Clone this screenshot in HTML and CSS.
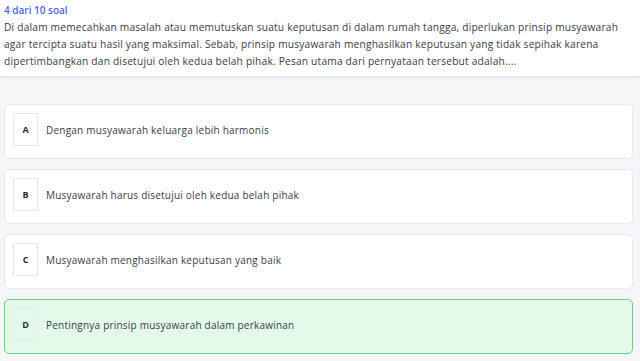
FILE: index.html
```html
<!DOCTYPE html>
<html>
<head>
<meta charset="utf-8">
<link rel="stylesheet" href="styles.css">
</head>
<body>
<header class="question">
  <div class="counter">4 dari 10 soal</div>
  <p class="text">Di dalam memecahkan masalah atau memutuskan suatu keputusan di dalam rumah tangga, diperlukan prinsip musyawarah agar tercipta suatu hasil yang maksimal. Sebab, prinsip musyawarah menghasilkan keputusan yang tidak sepihak karena dipertimbangkan dan disetujui oleh kedua belah pihak. Pesan utama dari pernyataan tersebut adalah....</p>
</header>
<main class="options">
  <div class="option"><span class="letter">A</span><span class="label">Dengan musyawarah keluarga lebih harmonis</span></div>
  <div class="option"><span class="letter">B</span><span class="label">Musyawarah harus disetujui oleh kedua belah pihak</span></div>
  <div class="option"><span class="letter">C</span><span class="label">Musyawarah menghasilkan keputusan yang baik</span></div>
  <div class="option selected"><span class="letter">D</span><span class="label">Pentingnya prinsip musyawarah dalam perkawinan</span></div>
</main>
</body>
</html>
```
FILE: styles.css
```css
html, body {
  margin: 0;
  padding: 0;
  background: #f5f6f8;
  font-family: "Open Sans", "Noto Sans", sans-serif;
}
.question {
  background: #ffffff;
  padding: 3px 4px 0 4px;
  height: 73px;
  box-shadow: 0 1px 3px rgba(0,0,0,0.12);
}
.counter {
  color: #4f63f2;
  font-size: 10px;
  font-weight: 600;
  line-height: 14px;
}
.text {
  margin: 2px 0 0 0;
  color: #3b3b4a;
  font-size: 10.2px;
  line-height: 17px;
  letter-spacing: 0.2px;
}
.options {
  display: flex;
  flex-direction: column;
  gap: 10px;
  padding: 28px 7px 0 4px;
}
.option {
  display: flex;
  align-items: center;
  height: 53px;
  box-sizing: content-box;
  background: #ffffff;
  border: 1px solid #e6e9f0;
  border-radius: 5px;
  padding: 0 0 0 8px;
}
.option .letter {
  margin-bottom: 4px;
}
.option .label {
  margin-bottom: 4px;
}
.option.selected {
  background: #e3faea;
  border-color: #6fcd87;
}
.letter {
  width: 23px;
  height: 31px;
  border: 1px solid #e6e9f0;
  display: flex;
  align-items: center;
  justify-content: center;
  font-size: 9px;
  font-weight: 700;
  color: #2a2a3a;
}
.label {
  margin-left: 8px;
  font-size: 10px;
  color: #3b3b4a;
  letter-spacing: 0.22px;
}
```
